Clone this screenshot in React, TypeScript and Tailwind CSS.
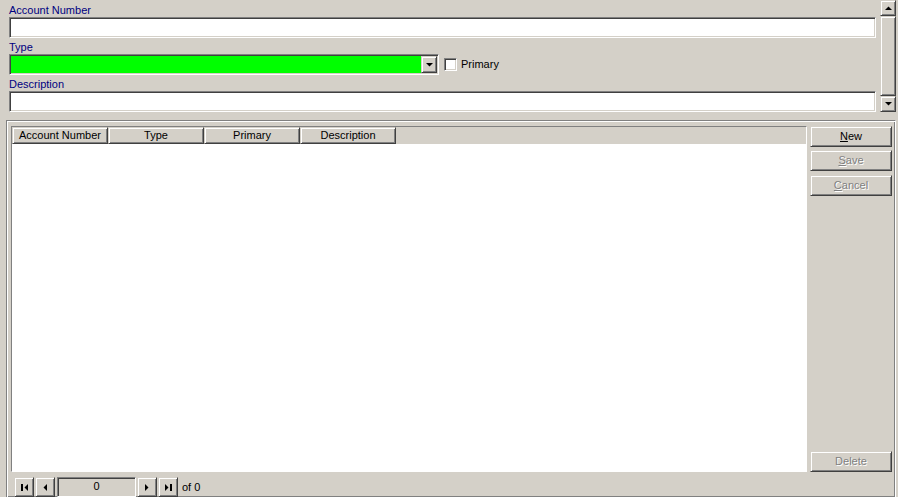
import React from "react";

const sunken =
  "border-t border-l border-t-[#808080] border-l-[#808080] border-r border-b border-r-white border-b-white shadow-[inset_1px_1px_0_#404040,inset_-1px_-1px_0_#d4d0c8]";
const raised =
  "border-t border-l border-t-[#d4d0c8] border-l-[#d4d0c8] border-r border-b border-r-[#404040] border-b-[#404040] shadow-[inset_1px_1px_0_#fff,inset_-1px_-1px_0_#808080]";

function Arrow({ dir }: { dir: "up" | "down" | "left" | "right" }) {
  const pts = {
    up: "0,4 7,4 3.5,0.5",
    down: "0,0 7,0 3.5,3.5",
    left: "4,0 4,7 0.5,3.5",
    right: "0,0 0,7 3.5,3.5",
  }[dir];
  const w = dir === "up" || dir === "down" ? 7 : 4;
  const h = dir === "up" || dir === "down" ? 4 : 7;
  return (
    <svg width={w} height={h} viewBox={`0 0 ${w} ${h}`}>
      <polygon points={pts} fill="#000" />
    </svg>
  );
}

function Label({ children }: { children: React.ReactNode }) {
  return <div className="h-[13px] text-[11px] leading-[13px] text-[#000080]">{children}</div>;
}

function Button({
  label,
  accel,
  disabled,
}: {
  label: string;
  accel?: number;
  disabled?: boolean;
}) {
  const chars = label.split("");
  return (
    <div
      className={`flex h-[21px] w-[82px] items-center justify-center text-[11px] ${raised} ${
        disabled ? "text-[#808080] [text-shadow:1px_1px_0_#fff]" : "text-black"
      }`}
    >
      {chars.map((c, i) =>
        i === accel ? (
          <span key={i} className="underline underline-offset-1">
            {c}
          </span>
        ) : (
          <span key={i}>{c}</span>
        )
      )}
    </div>
  );
}

function NavButton({ children }: { children: React.ReactNode }) {
  return (
    <div className={`flex h-[20px] w-[20px] items-center justify-center ${raised}`}>{children}</div>
  );
}

export default function App() {
  const columns = ["Account Number", "Type", "Primary", "Description"];

  return (
    <div className="flex h-[497px] w-[898px] flex-col overflow-hidden bg-[#d4d0c8] font-['Liberation_Sans',Arial,sans-serif] text-[11px]">
      <div className="flex h-[113px]">
        <div className="w-[880px] pl-[9px] pr-[5px] pt-[4px]">
          <Label>Account Number</Label>
          <div className={`h-[21px] w-[867px] bg-white ${sunken}`} />

          <div className="mt-[3px]">
            <Label>Type</Label>
            <div className="flex items-center">
              <div className={`flex h-[21px] w-[430px] items-center justify-end bg-[#00ff00] pr-[1px] ${sunken}`}>
                <div className={`flex h-[17px] w-[16px] items-center justify-center bg-[#d4d0c8] ${raised}`}>
                  <Arrow dir="down" />
                </div>
              </div>
              <div className={`ml-[5px] h-[13px] w-[13px] bg-white ${sunken}`} />
              <span className="ml-[4px] text-black">Primary</span>
            </div>
          </div>

          <div className="mt-[3px]">
            <Label>Description</Label>
            <div className={`h-[21px] w-[867px] bg-white ${sunken}`} />
          </div>
        </div>

        <div className="flex h-[112px] w-[16px] flex-col">
          <div className={`flex h-[16px] w-[16px] items-center justify-center ${raised}`}>
            <Arrow dir="up" />
          </div>
          <div className={`flex-1 ${raised}`} />
          <div className={`flex h-[16px] w-[16px] items-center justify-center ${raised}`}>
            <Arrow dir="down" />
          </div>
        </div>
      </div>

      <div className="ml-[6px] mt-[8px] flex w-[890px] flex-1 flex-col border-t border-l border-t-[#808080] border-l-[#808080] border-r border-b border-r-white border-b-white shadow-[inset_1px_1px_0_#fff,inset_-1px_-1px_0_#808080] pl-[4px] pt-[5px]">
        <div className="flex">
          <div className={`flex h-[346px] w-[796px] flex-col bg-white ${sunken}`}>
            <div className="flex h-[17px] bg-[#d4d0c8]">
              {columns.map((c) => (
                <div
                  key={c}
                  className={`flex h-[17px] w-[96px] items-center justify-center text-black ${raised}`}
                >
                  {c}
                </div>
              ))}
            </div>
            <div className="flex-1 bg-white" />
          </div>

          <div className="ml-[3px] flex flex-col">
            <Button label="New" accel={0} />
            <div className="mt-[3px]">
              <Button label="Save" accel={0} disabled />
            </div>
            <div className="mt-[4px]">
              <Button label="Cancel" accel={0} disabled />
            </div>
            <div className="mt-auto">
              <Button label="Delete" disabled />
            </div>
          </div>
        </div>

        <div className="mt-[5px] flex items-center pl-[3px]">
          <NavButton>
            <div className="flex items-center">
              <div className="mr-px h-[7px] w-[2px] bg-black" />
              <Arrow dir="left" />
            </div>
          </NavButton>
          <div className="ml-[1px]">
            <NavButton>
              <Arrow dir="left" />
            </NavButton>
          </div>
          <div className={`ml-[2px] flex h-[20px] w-[79px] justify-center pt-[2px] leading-[13px] text-black ${sunken}`}>
            0
          </div>
          <div className="ml-[1px]">
            <NavButton>
              <Arrow dir="right" />
            </NavButton>
          </div>
          <div className="ml-[1px]">
            <NavButton>
              <div className="flex items-center">
                <Arrow dir="right" />
                <div className="ml-px h-[7px] w-[2px] bg-black" />
              </div>
            </NavButton>
          </div>
          <span className="ml-[4px] text-black">of 0</span>
        </div>
      </div>
    </div>
  );
}
